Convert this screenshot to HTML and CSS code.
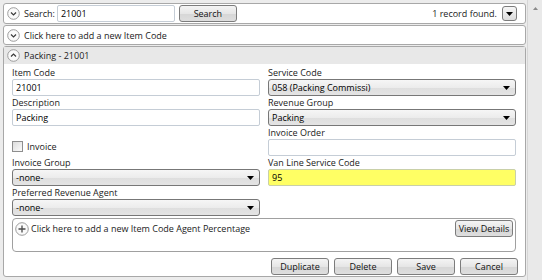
FILE: index.html
```html
<!DOCTYPE html>
<html lang="en">
<head>
    <meta charset="UTF-8">
    <meta name="viewport" content="width=device-width, initial-scale=1.0">
    <title>Item Codes</title>
    <link rel="stylesheet" href="styles.css">
</head>
<body>
    <div class="window">
        <div class="main">
            <div class="bar search-bar">
                <span class="toggle">
                    <svg width="13" height="13" viewBox="0 0 13 13"><circle cx="6.5" cy="6.5" r="5.8" class="toggle-ring"/><polyline points="4,5.5 6.5,8 9,5.5" class="toggle-mark"/></svg>
                </span>
                <label class="bar-label" for="search">Search:</label>
                <input type="text" id="search" class="text-input search-input" value="21001">
                <button class="btn search-btn">Search</button>
                <span class="found">1 record found.</span>
                <button class="menu-btn">
                    <svg width="7" height="4" viewBox="0 0 7 4"><polygon points="0,0 7,0 3.5,4" fill="#000"/></svg>
                </button>
            </div>

            <div class="bar">
                <span class="toggle">
                    <svg width="13" height="13" viewBox="0 0 13 13"><circle cx="6.5" cy="6.5" r="5.8" class="toggle-ring"/><polyline points="4,5.5 6.5,8 9,5.5" class="toggle-mark"/></svg>
                </span>
                <span class="bar-label">Click here to add a new Item Code</span>
            </div>

            <div class="panel">
                <div class="panel-head">
                    <span class="toggle">
                        <svg width="13" height="13" viewBox="0 0 13 13"><circle cx="6.5" cy="6.5" r="5.8" class="toggle-ring"/><polyline points="4,7.5 6.5,5 9,7.5" class="toggle-mark"/></svg>
                    </span>
                    <span class="bar-label">Packing - 21001</span>
                </div>

                <div class="panel-body">
                    <div class="form-grid">
                        <div class="field">
                            <label for="itemCode">Item Code</label>
                            <input type="text" id="itemCode" class="text-input" value="21001">
                        </div>
                        <div class="field">
                            <label>Service Code</label>
                            <div class="select"><span>058 (Packing Commissi)</span><svg width="7" height="4" viewBox="0 0 7 4"><polygon points="0,0 7,0 3.5,4" fill="#000"/></svg></div>
                        </div>
                        <div class="field">
                            <label for="description">Description</label>
                            <input type="text" id="description" class="text-input" value="Packing">
                        </div>
                        <div class="field">
                            <label>Revenue Group</label>
                            <div class="select"><span>Packing</span><svg width="7" height="4" viewBox="0 0 7 4"><polygon points="0,0 7,0 3.5,4" fill="#000"/></svg></div>
                        </div>
                        <div class="field check-field">
                            <span class="checkbox"></span>
                            <span>Invoice</span>
                        </div>
                        <div class="field">
                            <label for="invoiceOrder">Invoice Order</label>
                            <input type="text" id="invoiceOrder" class="text-input" value="">
                        </div>
                        <div class="field">
                            <label>Invoice Group</label>
                            <div class="select"><span>-none-</span><svg width="7" height="4" viewBox="0 0 7 4"><polygon points="0,0 7,0 3.5,4" fill="#000"/></svg></div>
                        </div>
                        <div class="field">
                            <label for="vanLine">Van Line Service Code</label>
                            <input type="text" id="vanLine" class="text-input highlight" value="95">
                        </div>
                        <div class="field">
                            <label>Preferred Revenue Agent</label>
                            <div class="select"><span>-none-</span><svg width="7" height="4" viewBox="0 0 7 4"><polygon points="0,0 7,0 3.5,4" fill="#000"/></svg></div>
                        </div>
                    </div>

                    <div class="agents">
                        <div class="agents-head">
                            <svg class="plus" width="14" height="14" viewBox="0 0 14 14"><circle cx="7" cy="7" r="6.3" class="toggle-ring"/><path d="M7 3.5v7M3.5 7h7" stroke="#4a4a4a" stroke-width="1.3"/></svg>
                            <span class="agents-label">Click here to add a new Item Code Agent Percentage</span>
                            <button class="btn details-btn">View Details</button>
                        </div>
                    </div>

                    <div class="actions">
                        <button class="btn">Duplicate</button>
                        <button class="btn">Delete</button>
                        <button class="btn">Save</button>
                        <button class="btn">Cancel</button>
                    </div>
                </div>
            </div>
        </div>
        <div class="scrollbar">
            <svg width="5" height="3" viewBox="0 0 5 3"><polygon points="0,3 5,3 2.5,0" fill="#8a8a8a"/></svg>
        </div>
    </div>
</body>
</html>
```

FILE: styles.css
```css
body {
    margin: 0;
    background: #ececec;
    font-family: "Open Sans", "Noto Sans", sans-serif;
    font-size: 9px;
    color: #1b1b1b;
}
.window {
    display: flex;
    width: 542px;
    height: 280px;
}
.main {
    width: 523px;
    padding: 3px 0 0 3px;
    display: flex;
    flex-direction: column;
    gap: 1px;
}
.scrollbar {
    width: 15px;
    margin-left: 1px;
    background: #e9e9e9;
    border-left: 1px solid #d6d6d6;
    display: flex;
    justify-content: center;
    padding-top: 7px;
    box-sizing: border-box;
    align-items: flex-start;
}
.bar {
    height: 20px;
    box-sizing: border-box;
    background: #fff;
    border: 1px solid #a8a8a8;
    border-radius: 3px;
    display: flex;
    align-items: center;
    padding-left: 3px;
}
.search-bar {
    height: 21px;
    padding-right: 8px;
}
.toggle {
    display: flex;
    width: 13px;
    height: 13px;
    margin-right: 4px;
}
.toggle-ring {
    fill: #fafafa;
    stroke: #9c9c9c;
    stroke-width: 1;
}
.toggle-mark {
    fill: none;
    stroke: #3a3a3a;
    stroke-width: 1.2;
}
.bar-label {
    white-space: nowrap;
}
.text-input {
    font: inherit;
    color: #000;
    height: 17px;
    box-sizing: border-box;
    border: 1px solid #c5cdd6;
    border-radius: 2px;
    padding: 0 3px;
    margin: 0;
    background: #fff;
    outline: none;
}
.search-input {
    width: 118px;
    margin-left: 2px;
}
.btn {
    font: inherit;
    color: #111;
    height: 17px;
    box-sizing: border-box;
    padding: 0;
    margin: 0;
    border: 1px solid #7c7c7c;
    border-radius: 3px;
    background: linear-gradient(#f4f4f4, #e6e6e6 50%, #d6d6d6 51%, #dedede);
}
.search-btn {
    width: 58px;
    margin-left: 4px;
}
.found {
    margin-left: auto;
    margin-right: 5px;
}
.menu-btn {
    width: 15px;
    height: 15px;
    padding: 0;
    box-sizing: border-box;
    border: 1px solid #7c7c7c;
    border-radius: 3px;
    background: linear-gradient(#f6f6f6, #dcdcdc);
    display: flex;
    align-items: center;
    justify-content: center;
}
.panel {
    flex: 1;
    margin-bottom: 3px;
    background: #fff;
    border: 1px solid #a8a8a8;
    border-radius: 3px;
    display: flex;
    flex-direction: column;
}
.panel-head {
    height: 17px;
    background: #e8e8e8;
    display: flex;
    align-items: center;
    padding-left: 3px;
}
.panel-body {
    padding: 3px 9px 0 8px;
}
.form-grid {
    display: grid;
    grid-template-columns: 248px 248px;
    column-gap: 8px;
    row-gap: 1px;
}
.field {
    display: flex;
    flex-direction: column;
    height: 29px;
}
.field label {
    line-height: 12px;
    height: 12px;
    white-space: nowrap;
}
.check-field {
    flex-direction: row;
    align-items: flex-end;
    padding-bottom: 3px;
    box-sizing: border-box;
    gap: 4px;
    line-height: 12px;
}
.checkbox {
    width: 9px;
    height: 9px;
    border: 1px solid #8e8e8e;
    background: linear-gradient(135deg, #dcdcdc, #fbfbfb);
    margin-bottom: 1px;
}
.select {
    height: 17px;
    box-sizing: border-box;
    border: 1px solid #777;
    border-radius: 3px;
    background: linear-gradient(#f6f6f6, #ececec 50%, #dedede 51%, #e4e4e4);
    display: flex;
    align-items: center;
    justify-content: space-between;
    padding: 0 5px 0 3px;
    color: #000;
}
.highlight {
    background: #ffff64;
    border-color: #c9d0a8;
}
.agents {
    margin-top: 2px;
    height: 34px;
    box-sizing: border-box;
    border: 1px solid #a0a0a0;
    border-radius: 4px;
    background: #fff;
    width: 504px;
}
.agents-head {
    display: flex;
    align-items: center;
    padding: 1px 2px 0 2px;
}
.plus {
    margin-right: 2px;
}
.agents-label {
    white-space: nowrap;
}
.details-btn {
    margin-left: auto;
    width: 58px;
}
.actions {
    display: flex;
    justify-content: flex-end;
    gap: 5px;
    margin-top: 6px;
    margin-right: -2px;
}
.actions .btn {
    width: 58px;
}
```
